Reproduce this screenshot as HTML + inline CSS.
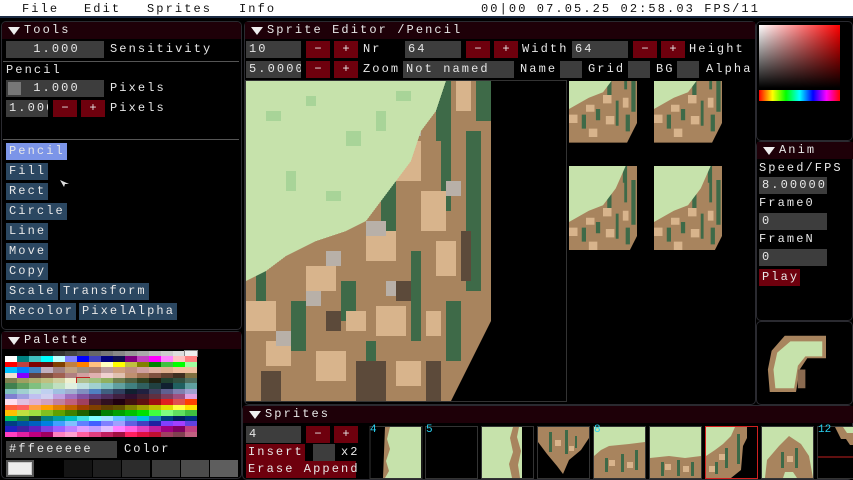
<!DOCTYPE html>
<html><head><meta charset="utf-8"><style>
*{margin:0;padding:0;box-sizing:border-box}
html,body{width:853px;height:480px;overflow:hidden}
body{background:#000;position:relative;font-family:"Liberation Mono",monospace;font-size:12px;letter-spacing:2.1px;color:#e8e8e8}
.a{position:absolute;white-space:nowrap}
.t{position:absolute;height:17px;line-height:17px;white-space:nowrap}
.in{position:absolute;height:17px;line-height:17px;background:#3d3d3d;padding-left:3px;overflow:hidden;white-space:nowrap}
.bm{position:absolute;width:24px;height:17px;line-height:17px;background:#6e000d;text-align:center;letter-spacing:0}
.tb{position:absolute;height:17px;line-height:17px;background:#1e0008;padding-left:22px}
.tb:before{content:"";position:absolute;left:6px;top:5px;border-left:6px solid transparent;border-right:6px solid transparent;border-top:8px solid #eee}
.pn{position:absolute;border:1px solid #2a2a30;border-radius:5px;background:#000}
.btn{position:absolute;height:17px;line-height:17px;background:#2b4761;padding:0 2px 0 3px}
.bx{position:absolute;width:22px;height:17px;background:#3d3d3d}
.pal{position:absolute;left:5px;top:351px;width:192px;height:86px;display:grid;grid-template-columns:repeat(16,12px);grid-auto-rows:5.375px}
.sw{position:absolute;top:460px;height:17px;width:28px}
</style></head><body>

<!-- menubar -->
<div class="a" style="left:0;top:0;width:853px;height:18px;background:#fff;border-bottom:2px solid #1c2c44"></div>
<div class="t" style="left:22px;top:1px;color:#111">File</div>
<div class="t" style="left:84px;top:1px;color:#111">Edit</div>
<div class="t" style="left:147px;top:1px;color:#111">Sprites</div>
<div class="t" style="left:239px;top:1px;color:#111">Info</div>
<div class="t" style="left:481px;top:1px;color:#111">00|00 07.05.25 02:58.03  FPS/11</div>

<!-- Tools panel -->
<div class="pn" style="left:1px;top:21px;width:241px;height:309px"></div>
<div class="tb" style="left:2px;top:22px;width:239px;border-radius:4px 4px 0 0">Tools</div>
<div class="in" style="left:6px;top:41px;width:98px;text-align:center">1.000</div>
<div class="t" style="left:110px;top:41px">Sensitivity</div>
<div class="a" style="left:3px;top:61px;width:236px;height:1px;background:#555"></div>
<div class="t" style="left:6px;top:62px">Pencil</div>
<div class="in" style="left:6px;top:80px;width:98px;text-align:center">1.000</div>
<div class="a" style="left:8px;top:82px;width:13px;height:13px;background:#777"></div>
<div class="t" style="left:110px;top:80px">Pixels</div>
<div class="in" style="left:6px;top:100px;width:42px">1.000</div>
<div class="bm" style="left:53px;top:100px">−</div>
<div class="bm" style="left:81px;top:100px">+</div>
<div class="t" style="left:110px;top:100px">Pixels</div>
<div class="a" style="left:3px;top:139px;width:236px;height:1px;background:#555"></div>
<div class="btn" style="left:6px;top:143px;background:#7c95e8">Pencil</div>
<div class="btn" style="left:6px;top:163px">Fill</div>
<div class="btn" style="left:6px;top:183px">Rect</div>
<div class="btn" style="left:6px;top:203px">Circle</div>
<div class="btn" style="left:6px;top:223px">Line</div>
<div class="btn" style="left:6px;top:243px">Move</div>
<div class="btn" style="left:6px;top:263px">Copy</div>
<div class="btn" style="left:6px;top:283px">Scale</div>
<div class="btn" style="left:60px;top:283px">Transform</div>
<div class="btn" style="left:6px;top:303px">Recolor</div>
<div class="btn" style="left:79px;top:303px">PixelAlpha</div>
<svg class="a" style="left:60px;top:180px" width="10" height="8"><path d="M0 0L9 4L5 4L4 7Z" fill="#ddd"/></svg>

<!-- Palette panel -->
<div class="pn" style="left:1px;top:331px;width:241px;height:148px"></div>
<div class="tb" style="left:2px;top:332px;width:239px">Palette</div>
<div class="pal">
<i style="background:#000"></i><i style="background:#000"></i><i style="background:#111"></i><i style="background:#222"></i><i style="background:#333"></i><i style="background:#444"></i><i style="background:#555"></i><i style="background:#666"></i><i style="background:#777"></i><i style="background:#888"></i><i style="background:#999"></i><i style="background:#aaa"></i><i style="background:#bbb"></i><i style="background:#ccc"></i><i style="background:#ddd"></i><i style="background:#eee;outline:1px solid #888"></i>
<i style="background:#fff"></i><i style="background:#008080"></i><i style="background:#40c0c0"></i><i style="background:#0ff"></i><i style="background:#c0ffff"></i><i style="background:#8080ff"></i><i style="background:#00f"></i><i style="background:#4040c0"></i><i style="background:#000080"></i><i style="background:#101050"></i><i style="background:#800080"></i><i style="background:#c040c0"></i><i style="background:#f0f"></i><i style="background:#ff80ff"></i><i style="background:#ffc0c0"></i><i style="background:#ff8080"></i>
<i style="background:#f00"></i><i style="background:#c04040"></i><i style="background:#800000"></i><i style="background:#601010"></i><i style="background:#804000"></i><i style="background:#c08040"></i><i style="background:#ff8000"></i><i style="background:#ffc080"></i><i style="background:#ffffc0"></i><i style="background:#ff0"></i><i style="background:#c0c040"></i><i style="background:#808000"></i><i style="background:#008000"></i><i style="background:#40c040"></i><i style="background:#0f0"></i><i style="background:#a0ffa0"></i>
<i style="background:#00c0ff"></i><i style="background:#0080ff"></i><i style="background:#4080c0"></i><i style="background:#c0b0c0"></i><i style="background:#a08080"></i><i style="background:#c0a080"></i><i style="background:#a09080"></i><i style="background:#b08070"></i><i style="background:#c0a0a0"></i><i style="background:#d0a080"></i><i style="background:#c09080"></i><i style="background:#d0a0a0"></i><i style="background:#e0b0a0"></i><i style="background:#e0b090"></i><i style="background:#f0c0a0"></i><i style="background:#f0c0a0"></i>
<i style="background:#f0e0d0"></i><i style="background:#8000ff"></i><i style="background:#604040"></i><i style="background:#805040"></i><i style="background:#a06050"></i><i style="background:#b08080"></i><i style="background:#d0a0a0"></i><i style="background:#e0b0b0"></i><i style="background:#f0d0d0"></i><i style="background:#e0c0b0"></i><i style="background:#c09070"></i><i style="background:#a07050"></i><i style="background:#805040"></i><i style="background:#604030"></i><i style="background:#403020"></i><i style="background:#807040"></i>
<i style="background:#808050"></i><i style="background:#a0a060"></i><i style="background:#b0b070"></i><i style="background:#c0c080"></i><i style="background:#d0d0a0"></i><i style="background:#f0f0d0"></i><i style="background:#b0c090;outline:1px solid #c02020"></i><i style="background:#a0c080"></i><i style="background:#90b060"></i><i style="background:#708050"></i><i style="background:#506040"></i><i style="background:#304020"></i><i style="background:#202010"></i><i style="background:#204030"></i><i style="background:#305040"></i><i style="background:#507060"></i>
<i style="background:#408050"></i><i style="background:#60a060"></i><i style="background:#80c080"></i><i style="background:#a0d0a0"></i><i style="background:#c0e0c0"></i><i style="background:#e0f0e0"></i><i style="background:#c0e0e0"></i><i style="background:#a0d0d0"></i><i style="background:#80c0c0"></i><i style="background:#60a0a0"></i><i style="background:#408080"></i><i style="background:#306060"></i><i style="background:#204040"></i><i style="background:#102030"></i><i style="background:#206060"></i><i style="background:#60a0a0"></i>
<i style="background:#80c0c0"></i><i style="background:#a0d0d0"></i><i style="background:#c0e0e0"></i><i style="background:#c0d0f0"></i><i style="background:#a0c0e0"></i><i style="background:#a0b0d0"></i><i style="background:#8090c0"></i><i style="background:#5080c0"></i><i style="background:#406080"></i><i style="background:#304060"></i><i style="background:#102030"></i><i style="background:#202040"></i><i style="background:#404060"></i><i style="background:#606090"></i><i style="background:#8080b0"></i><i style="background:#a0a0d0"></i>
<i style="background:#8080d0"></i><i style="background:#a0a0e0"></i><i style="background:#c0c0f0"></i><i style="background:#d0d0f0"></i><i style="background:#c0a0e0"></i><i style="background:#a070c0"></i><i style="background:#8050a0"></i><i style="background:#604080"></i><i style="background:#503060"></i><i style="background:#402040"></i><i style="background:#301030"></i><i style="background:#402030"></i><i style="background:#603040"></i><i style="background:#804060"></i><i style="background:#a05080"></i><i style="background:#e0a0e0"></i>
<i style="background:#ffe0f0"></i><i style="background:#e0c0e0"></i><i style="background:#e0b0d0"></i><i style="background:#d0a0c0"></i><i style="background:#c080a0"></i><i style="background:#c06080"></i><i style="background:#a04060"></i><i style="background:#502030"></i><i style="background:#301020"></i><i style="background:#200010"></i><i style="background:#401010"></i><i style="background:#601010"></i><i style="background:#a01010"></i><i style="background:#e02020"></i><i style="background:#e05050"></i><i style="background:#ff4000"></i>
<i style="background:#ff6040"></i><i style="background:#ff6060"></i><i style="background:#ffa040"></i><i style="background:#ffa000"></i><i style="background:#e08000"></i><i style="background:#c06000"></i><i style="background:#a04000"></i><i style="background:#804000"></i><i style="background:#604000"></i><i style="background:#605000"></i><i style="background:#808000"></i><i style="background:#a0a000"></i><i style="background:#c0c000"></i><i style="background:#e0e000"></i><i style="background:#ffff40"></i><i style="background:#ffe000"></i>
<i style="background:#ffc000"></i><i style="background:#c0e040"></i><i style="background:#a0e040"></i><i style="background:#80c020"></i><i style="background:#60a000"></i><i style="background:#408000"></i><i style="background:#206000"></i><i style="background:#004000"></i><i style="background:#008000"></i><i style="background:#00a000"></i><i style="background:#00c000"></i><i style="background:#00e000"></i><i style="background:#40ff40"></i><i style="background:#80ff80"></i><i style="background:#60e060"></i><i style="background:#40c040"></i>
<i style="background:#00c060"></i><i style="background:#208040"></i><i style="background:#204030"></i><i style="background:#008080"></i><i style="background:#00a0a0"></i><i style="background:#00c0c0"></i><i style="background:#40e0e0"></i><i style="background:#80ffff"></i><i style="background:#a0e0ff"></i><i style="background:#60c0ff"></i><i style="background:#40a0e0"></i><i style="background:#00c0e0"></i><i style="background:#2080c0"></i><i style="background:#004080"></i><i style="background:#002060"></i><i style="background:#003080"></i>
<i style="background:#004080"></i><i style="background:#0050a0"></i><i style="background:#0060c0"></i><i style="background:#0080e0"></i><i style="background:#40a0ff"></i><i style="background:#80c0ff"></i><i style="background:#6080ff"></i><i style="background:#4060ff"></i><i style="background:#8080ff"></i><i style="background:#a0a0ff"></i><i style="background:#6060e0"></i><i style="background:#4040c0"></i><i style="background:#2020a0"></i><i style="background:#8040ff"></i><i style="background:#a040ff"></i><i style="background:#6040e0"></i>
<i style="background:#2020c0"></i><i style="background:#4020a0"></i><i style="background:#6020c0"></i><i style="background:#8040e0"></i><i style="background:#a060ff"></i><i style="background:#c080ff"></i><i style="background:#e0a0ff"></i><i style="background:#c0a0ff"></i><i style="background:#e0c0ff"></i><i style="background:#ff80ff"></i><i style="background:#ff60e0"></i><i style="background:#e040c0"></i><i style="background:#c020a0"></i><i style="background:#a00080"></i><i style="background:#800060"></i><i style="background:#c04080"></i>
<i style="background:#ff40c0"></i><i style="background:#e020a0"></i><i style="background:#c00080"></i><i style="background:#a00060"></i><i style="background:#ff80c0"></i><i style="background:#ffa0d0"></i><i style="background:#ff60a0"></i><i style="background:#e04080"></i><i style="background:#c02060"></i><i style="background:#a01040"></i><i style="background:#ff2060"></i><i style="background:#e01040"></i><i style="background:#c01030"></i><i style="background:#a04060"></i><i style="background:#804050"></i><i style="background:#c06080"></i>
</div>
<div class="in" style="left:6px;top:441px;width:111px">#ffeeeeee</div>
<div class="t" style="left:124px;top:441px">Color</div>
<div class="a" style="left:6px;top:460px;width:28px;height:17px;background:#eee;border:2px solid #555;outline:1px solid #ccc;outline-offset:-3px"></div>
<div class="sw" style="left:64px;background:#141414"></div>
<div class="sw" style="left:93px;background:#1f1f1f"></div>
<div class="sw" style="left:122px;background:#2c2c2c"></div>
<div class="sw" style="left:152px;background:#3b3b3b"></div>
<div class="sw" style="left:181px;background:#4b4b4b"></div>
<div class="sw" style="left:210px;background:#5e5e5e"></div>

<!-- Sprite editor -->
<div class="pn" style="left:244px;top:21px;width:512px;height:384px"></div>
<div class="tb" style="left:245px;top:22px;width:510px">Sprite Editor /Pencil</div>
<div class="in" style="left:246px;top:41px;width:55px">10</div>
<div class="bm" style="left:306px;top:41px">−</div>
<div class="bm" style="left:334px;top:41px">+</div>
<div class="t" style="left:363px;top:41px">Nr</div>
<div class="in" style="left:405px;top:41px;width:56px">64</div>
<div class="bm" style="left:466px;top:41px">−</div>
<div class="bm" style="left:494px;top:41px">+</div>
<div class="t" style="left:522px;top:41px">Width</div>
<div class="in" style="left:572px;top:41px;width:56px">64</div>
<div class="bm" style="left:633px;top:41px">−</div>
<div class="bm" style="left:661px;top:41px">+</div>
<div class="t" style="left:689px;top:41px">Height</div>
<div class="in" style="left:246px;top:61px;width:55px">5.0000</div>
<div class="bm" style="left:306px;top:61px">−</div>
<div class="bm" style="left:334px;top:61px">+</div>
<div class="t" style="left:363px;top:61px">Zoom</div>
<div class="in" style="left:403px;top:61px;width:111px">Not named</div>
<div class="t" style="left:520px;top:61px">Name</div>
<div class="bx" style="left:560px;top:61px"></div>
<div class="t" style="left:588px;top:61px">Grid</div>
<div class="bx" style="left:628px;top:61px"></div>
<div class="t" style="left:656px;top:61px">BG</div>
<div class="bx" style="left:677px;top:61px"></div>
<div class="t" style="left:706px;top:61px">Alpha</div>

<svg class="a" style="left:246px;top:81px;outline:1px solid #333" width="320" height="320" viewBox="0 0 64 64" shape-rendering="crispEdges">
<rect width="64" height="64" fill="#000"/>
<path d="M0 0H49V48L45 56L41 64H0Z" fill="#a8845e"/>
<path d="M38 0h3v26h-2v-14h-1zM27 20h3v12h-3zM44 10h3v32h-3zM19 40h3v8h-3zM33 34h2v18h-2zM40 44h3v12h-3zM9 44h3v10h-3zM2 38h2v6h-2zM24 52h2v8h-2zM46 0h3v8h-3z" fill="#3e6a48"/>
<path d="M30 12h5v8h-5zM24 30h6v6h-6zM35 22h5v8h-5zM12 37h6v5h-6zM0 44h6v6h-6zM26 45h6v6h-6zM14 54h6v6h-6zM38 32h4v7h-4zM20 46h4v4h-4zM4 52h5v5h-5zM30 56h5v5h-5zM42 0h3v6h-3zM36 46h3v5h-3z" fill="#d8b48c"/>
<path d="M32 8h3v3h-3zM16 34h3v3h-3zM24 28h4v3h-4zM40 20h3v3h-3zM6 50h3v3h-3zM12 42h3v3h-3zM28 40h3v3h-3z" fill="#b8b0a8"/>
<path d="M22 56h6v8h-6zM3 58h4v6h-4zM43 30h2v10h-2zM30 40h3v4h-3zM36 56h3v8h-3zM16 46h3v4h-3z" fill="#5c4a3a"/>
<path d="M0 0H40L38 6L35 10L33 16L30 20L27 24L24 28L20 30L14 32L8 35L4 38L0 40Z" fill="#c6e2ab"/>
<path d="M4 6h3v2h-3zM12 3h2v2h-2zM20 10h3v3h-3zM8 18h2v4h-2zM16 22h3v2h-3zM26 6h2v4h-2zM30 2h3v2h-3z" fill="#a8d498"/>
</svg>

<!-- previews -->
<svg class="a" style="left:569px;top:81px" width="68" height="84" viewBox="0 20 48 60" preserveAspectRatio="none">
<rect y="0" width="64" height="80" fill="#000"/><path d="M0 0H49V48L45 56L41 64H0Z" fill="#a8845e"/><path d="M38 0h3v26h-2v-14h-1zM27 20h3v12h-3zM44 10h3v32h-3zM19 40h3v8h-3zM33 34h2v18h-2zM40 44h3v12h-3zM9 44h3v10h-3z" fill="#3e6a48"/><path d="M24 30h6v6h-6zM12 37h6v5h-6zM0 44h6v6h-6zM26 45h6v6h-6zM14 54h6v6h-6zM38 32h4v7h-4z" fill="#d8b48c"/><path d="M0 0H40L33 16L24 28L14 32L0 40Z" fill="#c6e2ab"/>
</svg>
<svg class="a" style="left:654px;top:81px" width="68" height="84" viewBox="0 20 48 60" preserveAspectRatio="none">
<path d="M0 0H49V48L45 56L41 64H0Z" fill="#a8845e"/><path d="M38 0h3v26h-2v-14h-1zM27 20h3v12h-3zM44 10h3v32h-3zM19 40h3v8h-3zM33 34h2v18h-2zM40 44h3v12h-3zM9 44h3v10h-3z" fill="#3e6a48"/><path d="M24 30h6v6h-6zM12 37h6v5h-6zM0 44h6v6h-6zM26 45h6v6h-6zM14 54h6v6h-6zM38 32h4v7h-4z" fill="#d8b48c"/><path d="M0 0H40L33 16L24 28L14 32L0 40Z" fill="#c6e2ab"/>
</svg>
<svg class="a" style="left:569px;top:166px" width="68" height="84" viewBox="0 0 48 60" preserveAspectRatio="none">
<path d="M0 0H49V48L45 56L41 64H0Z" fill="#a8845e"/><path d="M38 0h3v26h-2v-14h-1zM27 20h3v12h-3zM44 10h3v32h-3zM19 40h3v8h-3zM33 34h2v18h-2zM40 44h3v12h-3zM9 44h3v10h-3z" fill="#3e6a48"/><path d="M24 30h6v6h-6zM12 37h6v5h-6zM0 44h6v6h-6zM26 45h6v6h-6zM14 54h6v6h-6zM38 32h4v7h-4z" fill="#d8b48c"/><path d="M0 0H40L33 16L24 28L14 32L0 40Z" fill="#c6e2ab"/>
</svg>
<svg class="a" style="left:654px;top:166px" width="68" height="84" viewBox="0 0 48 60" preserveAspectRatio="none">
<path d="M0 0H49V48L45 56L41 64H0Z" fill="#a8845e"/><path d="M38 0h3v26h-2v-14h-1zM27 20h3v12h-3zM44 10h3v32h-3zM19 40h3v8h-3zM33 34h2v18h-2zM40 44h3v12h-3zM9 44h3v10h-3z" fill="#3e6a48"/><path d="M24 30h6v6h-6zM12 37h6v5h-6zM0 44h6v6h-6zM26 45h6v6h-6zM14 54h6v6h-6zM38 32h4v7h-4z" fill="#d8b48c"/><path d="M0 0H40L33 16L24 28L14 32L0 40Z" fill="#c6e2ab"/>
</svg>

<!-- color picker -->
<div class="pn" style="left:756px;top:21px;width:97px;height:120px"></div>
<div class="a" style="left:759px;top:25px;width:81px;height:63px;background:linear-gradient(to bottom,rgba(0,0,0,0),#000),linear-gradient(to right,#fff,#f00)"></div>
<div class="a" style="left:759px;top:90px;width:81px;height:11px;background:linear-gradient(to right,#f00,#ff0,#0f0,#0ff,#00f,#f0f,#f00)"></div>

<!-- Anim -->
<div class="pn" style="left:756px;top:141px;width:97px;height:180px"></div>
<div class="tb" style="left:757px;top:142px;width:96px">Anim</div>
<div class="t" style="left:759px;top:160px">Speed/FPS</div>
<div class="in" style="left:759px;top:177px;width:68px">8.00000</div>
<div class="t" style="left:759px;top:195px">Frame0</div>
<div class="in" style="left:759px;top:213px;width:68px">0</div>
<div class="t" style="left:759px;top:231px">FrameN</div>
<div class="in" style="left:759px;top:249px;width:68px">0</div>
<div class="a" style="left:759px;top:269px;width:41px;height:17px;line-height:17px;background:#6e000d;padding-left:3px">Play</div>
<div class="pn" style="left:756px;top:321px;width:97px;height:84px"></div>
<svg class="a" style="left:766px;top:332px" width="60" height="60" viewBox="0 0 64 64">
<path d="M20 4H64V28H44L36 40L32 64H4L2 40L6 20Z" fill="#a8845e"/>
<path d="M26 10H60V26H42L34 36L30 60H10L8 40L12 22Z" fill="#c6e2ab"/>
<path d="M34 40h8v20h-8z" fill="#8a6a50"/>
</svg>

<!-- Sprites -->
<div class="pn" style="left:242px;top:405px;width:611px;height:75px"></div>
<div class="tb" style="left:243px;top:406px;width:610px">Sprites</div>
<div class="in" style="left:246px;top:426px;width:55px">4</div>
<div class="bm" style="left:306px;top:426px">−</div>
<div class="bm" style="left:334px;top:426px">+</div>
<div class="a" style="left:246px;top:444px;width:59px;height:17px;line-height:17px;background:#6e000d;padding-left:2px">Insert</div>
<div class="bx" style="left:313px;top:444px"></div>
<div class="t" style="left:341px;top:444px">x2</div>
<div class="a" style="left:246px;top:461px;width:110px;height:17px;line-height:17px;background:#6e000d;padding-left:2px">Erase Append</div>
<svg class="a" style="left:369px;top:426px" width="484" height="54">
<rect x="1" y="0.5" width="52" height="52" fill="#000" stroke="#333"/>
<rect x="16" y="1" width="36" height="51" fill="#c6e2ab"/><path d="M16 1h5l-3 12 3 10-4 12 3 10-4 7h-2z" fill="#a8845e"/>
<rect x="56.5" y="0.5" width="52" height="52" fill="#000" stroke="#333"/>
<rect x="112.5" y="0.5" width="52" height="52" fill="#000" stroke="#333"/>
<rect x="113" y="1" width="40" height="51" fill="#c6e2ab"/><path d="M144 1h6l-2 10 4 14-3 14 2 13h-8l-3-14 4-12-3-14z" fill="#a8845e"/>
<rect x="168.5" y="0.5" width="52" height="52" fill="#000" stroke="#333"/>
<path d="M169 1H220V12L212 24L200 34L194 48L188 40L178 28L169 16Z" fill="#a8845e"/><path d="M180 6h3v20h-3zM196 4h3v24h-3zM206 10h2v12h-2z" fill="#3e6a48"/><path d="M186 14h6v6h-6zM200 20h5v5h-5z" fill="#d8b48c"/>
<rect x="224.5" y="0.5" width="52" height="52" fill="#000" stroke="#333"/>
<rect x="225" y="1" width="51" height="51" fill="#a8845e"/><path d="M225 1H276V16L260 18L240 20L232 24L225 30Z" fill="#c6e2ab"/><path d="M236 32h3v14h-3zM252 28h3v18h-3zM266 24h3v20h-3z" fill="#3e6a48"/><path d="M240 34h6v6h-6zM258 36h6v6h-6z" fill="#d8b48c"/>
<rect x="280.5" y="0.5" width="52" height="52" fill="#000" stroke="#333"/>
<rect x="281" y="1" width="51" height="51" fill="#a8845e"/><path d="M281 1H332V30L316 32L300 30L281 32Z" fill="#c6e2ab"/><path d="M292 36h3v14h-3zM308 34h3v16h-3zM322 36h3v14h-3z" fill="#3e6a48"/><path d="M296 38h6v6h-6zM314 40h6v6h-6z" fill="#d8b48c"/>
<rect x="336.5" y="0.5" width="52" height="52" fill="#000" stroke="#d02020"/>
<path d="M337 1H378V12L374 20L372 44L362 52H337Z" fill="#a8845e"/><path d="M337 1H366L362 10L354 18L346 24L337 30Z" fill="#c6e2ab"/><path d="M356 22h3v20h-3zM368 8h3v30h-3zM346 36h3v12h-3z" fill="#3e6a48"/><path d="M350 28h6v6h-6zM340 40h6v6h-6z" fill="#d8b48c"/>
<rect x="392.5" y="0.5" width="52" height="52" fill="#000" stroke="#333"/>
<rect x="393" y="1" width="51" height="51" fill="#c6e2ab"/><path d="M396 52L398 34L410 20L420 10L432 18L440 30L444 52H428L424 46H416L414 52Z" fill="#a8845e"/><path d="M412 26h3v16h-3zM426 22h3v20h-3z" fill="#3e6a48"/><path d="M418 30h6v6h-6z" fill="#d8b48c"/>
<rect x="448.5" y="0.5" width="40" height="52" fill="#000" stroke="#333"/>
<line x1="449" y1="31" x2="484" y2="31" stroke="#c02020"/>
<path d="M466 1h18v18h-3l-4-6h-5l-3-6z" fill="#a8845e"/><path d="M474 1h10v6h-6z" fill="#c6e2ab"/>
</svg>
<div class="a" style="left:370px;top:424px;color:#2ad0f0;font-size:11px;letter-spacing:0">4</div>
<div class="a" style="left:426px;top:424px;color:#2ad0f0;font-size:11px;letter-spacing:0">5</div>
<div class="a" style="left:594px;top:424px;color:#2ad0f0;font-size:11px;letter-spacing:0">8</div>
<div class="a" style="left:818px;top:424px;color:#2ad0f0;font-size:11px;letter-spacing:0">12</div>
</body></html>
